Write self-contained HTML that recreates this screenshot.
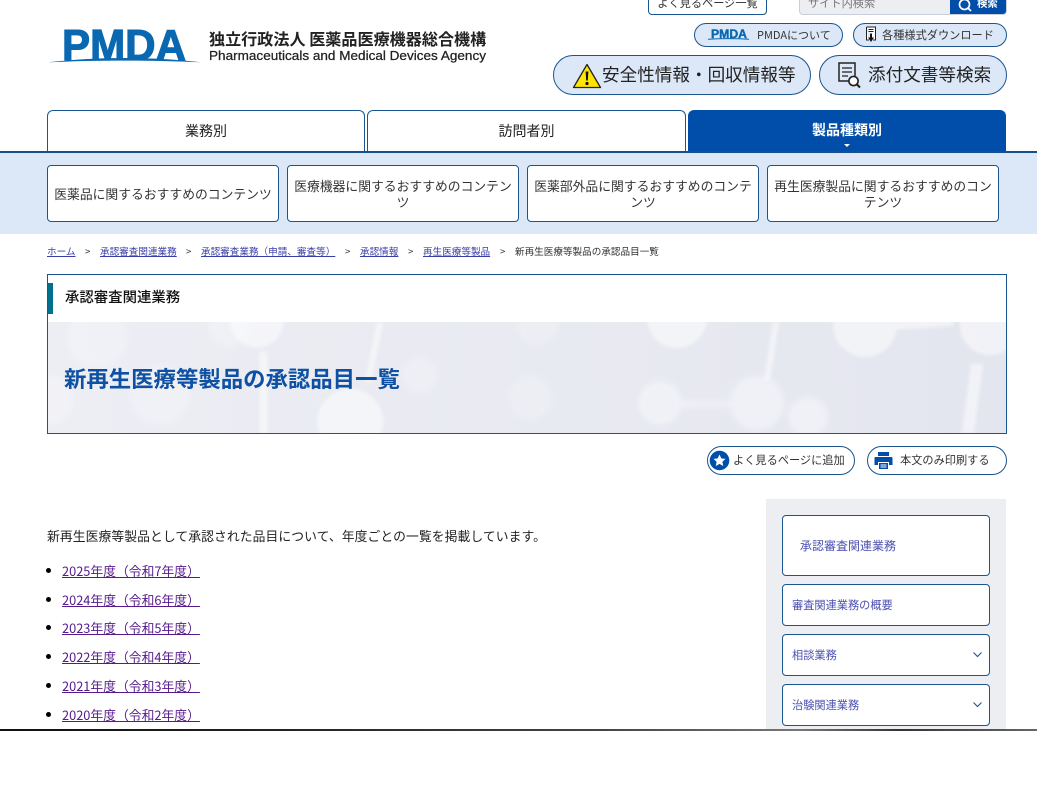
<!DOCTYPE html>
<html lang="ja"><head><meta charset="utf-8"><title>新再生医療等製品の承認品目一覧</title>
<style>
html,body{margin:0;padding:0;background:#fff}
body{width:1056px;height:800px;overflow:hidden;position:relative;font-family:"Noto Sans CJK JP","Liberation Sans",sans-serif;color:#222}
.a{position:absolute;box-sizing:border-box}
.c{display:flex;align-items:center;justify-content:center;text-align:center}
.b{border:1px solid #1a5590;border-radius:4px;background:#fff}
.p{border:1px solid #1a5590;background:#dce8f7}
.t{position:absolute;white-space:nowrap}
.sub{font-size:12.8px;line-height:16px;color:#333;padding:0 6px}
.sd{font-size:11.2px;color:#4a4fb0;display:flex;align-items:center;padding-left:9px}
.li{left:62px;font-size:12.8px;line-height:18px;color:#551a8b;text-decoration:underline;white-space:nowrap}
.dot{position:absolute;left:46px;width:5px;height:5px;border-radius:50%;background:#000}
.bc{top:244px;font-size:9.6px;line-height:14px;white-space:nowrap;color:#3a3fa8;text-decoration:underline}
.gt{top:244px;font-size:9.6px;line-height:14px;color:#333}
</style></head><body>

<!-- logo -->
<svg class="a" style="left:46px;top:24px" width="158" height="42" viewBox="0 0 158 42">
<text x="16" y="36" font-family="Liberation Sans" font-weight="700" font-size="43.5" fill="#0a68b1" stroke="#0a68b1" stroke-width="1.1" textLength="124" lengthAdjust="spacingAndGlyphs">PMDA</text>
<path d="M2 38.300C50 32.500 108 32.500 155 38.300C108 36 50 36 2 38.300Z" fill="#0a68b1"/>
</svg>
<div class="t" style="left:209px;top:28px;font-size:16.1px;line-height:20px;font-weight:700;color:#222">独立行政法人 医薬品医療機器総合機構</div>
<svg class="a" style="left:209px;top:47px" width="280" height="18" viewBox="0 0 280 18"><text x="0" y="13" font-family="Liberation Sans" font-size="12.500" fill="#222" stroke="#222" stroke-width=".25" textLength="277" lengthAdjust="spacingAndGlyphs">Pharmaceuticals and Medical Devices Agency</text></svg>

<!-- top row -->
<div class="a c b" style="left:648px;top:-10px;width:119px;height:25px;font-size:11.2px;color:#333">よく見るページ一覧</div>
<div class="a" style="left:799px;top:-10px;width:208px;height:25px;background:#eceef2;border:1px solid #c8cfdb;border-radius:4px;overflow:hidden">
 <div class="t" style="left:8px;top:2px;font-size:11.2px;line-height:20px;color:#777">サイト内検索</div>
 <div class="a" style="left:150px;top:-1px;width:58px;height:26px;background:#004ea9"></div>
 <svg class="a" style="left:157px;top:6px" width="16" height="16" viewBox="0 0 16 16"><circle cx="7.500" cy="7.500" r="5" fill="none" stroke="#fff" stroke-width="1.700"/><path d="M11 11l3 3" stroke="#fff" stroke-width="1.800"/></svg>
 <div class="t" style="left:177px;top:3px;font-size:10.4px;line-height:18px;font-weight:700;color:#fff">検索</div>
</div>

<!-- small pills -->
<div class="a p" style="left:694px;top:23px;width:149px;height:24px;border-radius:12px"></div>
<svg class="a" style="left:708px;top:27px" width="44" height="15" viewBox="0 0 44 15">
<text x="3" y="11" font-family="Liberation Sans" font-weight="700" font-size="12" fill="#0a68b1" stroke="#0a68b1" stroke-width=".4" textLength="36" lengthAdjust="spacingAndGlyphs">PMDA</text>
<path d="M0 12.300C14 11.400 28 11.400 41 12.300" stroke="#0a68b1" stroke-width="1" fill="none"/></svg>
<div class="t" style="left:757px;top:27px;font-size:11px;line-height:16px;color:#333">PMDAについて</div>

<div class="a p" style="left:853px;top:23px;width:154px;height:24px;border-radius:12px"></div>
<svg class="a" style="left:864px;top:26px" width="14" height="18" viewBox="0 0 14 18"><path d="M2.500 1h9v13h-2.500M5 14H2.500V1" fill="#fff" stroke="#222" stroke-width="1"/><path d="M4.500 3.500h5M4.500 5.500h5" stroke="#222"/><path d="M6 7.500h2v4h2L7 16l-3-4.500h2z" fill="#111"/></svg>
<div class="t" style="left:882px;top:27px;font-size:11.2px;line-height:16px;color:#333">各種様式ダウンロード</div>

<!-- large pills -->
<div class="a p" style="left:553px;top:55px;width:258px;height:40px;border-radius:20px"></div>
<svg class="a" style="left:572px;top:63px" width="30" height="26" viewBox="0 0 30 26"><path d="M15 1.500L28.500 24.500H1.500Z" fill="#ffe500" stroke="#222" stroke-width="1.300" stroke-linejoin="round"/><path d="M13.600 8.500h2.800l-.6 9h-1.600z" fill="#111"/><circle cx="15" cy="20.500" r="1.600" fill="#111"/></svg>
<div class="t" style="left:602px;top:62px;font-size:17.6px;line-height:25px;color:#222">安全性情報・回収情報等</div>

<div class="a p" style="left:819px;top:55px;width:188px;height:40px;border-radius:20px"></div>
<svg class="a" style="left:836px;top:61px" width="26" height="28" viewBox="0 0 26 28"><path d="M16 20H3V2h16v13" fill="none" stroke="#222" stroke-width="1.500"/><path d="M6 7h10M6 11h10M6 15h6" stroke="#222" stroke-width="1.300"/><circle cx="17.500" cy="20" r="4.600" fill="#fff" stroke="#222" stroke-width="1.600"/><path d="M21 23.500l3 3" stroke="#222" stroke-width="2"/></svg>
<div class="t" style="left:868px;top:62px;font-size:17.6px;line-height:25px;color:#222">添付文書等検索</div>

<!-- tabs -->
<div class="a c" style="left:47px;top:110px;width:318px;height:42px;padding-bottom:2px;background:#fff;border:1px solid #1a5590;border-bottom:0;border-radius:6px 6px 0 0;font-size:14px;color:#222">業務別</div>
<div class="a c" style="left:367px;top:110px;width:319px;height:42px;padding-bottom:2px;background:#fff;border:1px solid #1a5590;border-bottom:0;border-radius:6px 6px 0 0;font-size:14px;color:#222">訪問者別</div>
<div class="a c" style="left:688px;top:110px;width:318px;height:42px;padding-bottom:2px;background:#004ea9;border-radius:6px 6px 0 0;font-size:14px;font-weight:700;color:#fff">製品種類別</div>
<div class="a" style="left:844px;top:144px;width:0;height:0;border:3px solid transparent;border-top:3px solid #fff;border-bottom:0"></div>

<!-- sub nav -->
<div class="a" style="left:0;top:151px;width:1037px;height:83px;background:#dce8f7;border-top:2px solid #14508c"></div>
<div class="a c b sub" style="left:47px;top:165px;width:232px;height:57px">医薬品に関するおすすめのコンテンツ</div>
<div class="a c b sub" style="left:287px;top:165px;width:232px;height:57px">医療機器に関するおすすめのコンテン<br>ツ</div>
<div class="a c b sub" style="left:527px;top:165px;width:232px;height:57px">医薬部外品に関するおすすめのコンテ<br>ンツ</div>
<div class="a c b sub" style="left:767px;top:165px;width:232px;height:57px">再生医療製品に関するおすすめのコン<br>テンツ</div>

<!-- breadcrumb -->
<div class="a bc" style="left:47px">ホーム</div><div class="a gt" style="left:85px">&gt;</div>
<div class="a bc" style="left:100px">承認審査関連業務</div><div class="a gt" style="left:186px">&gt;</div>
<div class="a bc" style="left:201px">承認審査業務（申請、審査等）</div><div class="a gt" style="left:345px">&gt;</div>
<div class="a bc" style="left:360px">承認情報</div><div class="a gt" style="left:408px">&gt;</div>
<div class="a bc" style="left:423px">再生医療等製品</div><div class="a gt" style="left:500px">&gt;</div>
<div class="a t" style="left:515px;top:244px;font-size:9.6px;line-height:14px;color:#333">新再生医療等製品の承認品目一覧</div>

<!-- title box -->
<div class="a" style="left:47px;top:274px;width:960px;height:160px;background:#fff;border:1px solid #1a5590;overflow:hidden">
 <div class="a" style="left:-1px;top:8px;width:6px;height:31px;background:#00708f"></div>
 <div class="t" style="left:17px;top:11px;font-size:14.4px;line-height:22px;font-weight:500;color:#111">承認審査関連業務</div>
 <svg class="a" style="left:0;top:47px" width="958" height="111" viewBox="0 0 958 111">
  <defs><linearGradient id="g" x1="0" x2="1" y1="0" y2="0"><stop offset="0" stop-color="#edeef4"/><stop offset="1" stop-color="#e4e6ef"/></linearGradient>
  <filter id="f"><feGaussianBlur stdDeviation="3"/></filter><filter id="f2"><feGaussianBlur stdDeviation="1.500"/></filter></defs>
  <rect width="958" height="111" fill="url(#g)"/>
  <g fill="#fff" opacity=".22" filter="url(#f)">
   <circle cx="2" cy="78" r="24"/><circle cx="49" cy="16" r="30"/><circle cx="112" cy="73" r="30"/>
   <circle cx="372" cy="53" r="18"/><circle cx="482" cy="76" r="22"/><circle cx="489" cy="0" r="22"/>
   <circle cx="180" cy="5" r="20"/>
  </g>
  <g fill="#fff" opacity=".4" filter="url(#f)">
   <circle cx="612" cy="81" r="22"/><circle cx="709" cy="81" r="27"/><circle cx="760" cy="95" r="20"/>
   <path d="M632 79h58v6h-58z"/>
  </g>
  <g fill="#fff" opacity=".5" filter="url(#f2)">
   <circle cx="209" cy="-2" r="27"/><circle cx="302" cy="100" r="33"/>
   <circle cx="817" cy="3" r="32"/><circle cx="942" cy="3" r="30"/>
   <path d="M212 30h7v81h-7zM329 0h6l-12 60h-6zM725 0h6l-9 58h-6zM845 -4h60v8l-60 4zM923 42h12l-9 69h-12zM629 -34a30 30 0 1 0 .1 0z"/>
  </g>
 </svg>
 <div class="t" style="left:16px;top:86px;font-size:22.4px;line-height:34px;font-weight:700;color:#0e51a3">新再生医療等製品の承認品目一覧</div>
</div>

<!-- action buttons -->
<div class="a" style="left:707px;top:446px;width:148px;height:29px;border:1px solid #1a5590;border-radius:15px;background:#fff"></div>
<svg class="a" style="left:709px;top:449px" width="21" height="23" viewBox="0 0 21 23"><circle cx="10.500" cy="11.500" r="9.800" fill="#004ea9"/><path d="M10.500 5.500l1.800 3.900 4.200.5-3.100 2.900.8 4.200-3.700-2.100-3.700 2.100.8-4.200-3.100-2.900 4.200-.5z" fill="#fff"/></svg>
<div class="t" style="left:733px;top:452px;font-size:11.2px;line-height:17px;color:#333">よく見るページに追加</div>
<div class="a" style="left:867px;top:446px;width:140px;height:29px;border:1px solid #1a5590;border-radius:15px;background:#fff"></div>
<svg class="a" style="left:874px;top:451px" width="19" height="19" viewBox="0 0 19 19"><path d="M4 1h11v4H4zM1.500 6h16a1 1 0 0 1 1 1v7h-3.500v-3H4v3H.5V7a1 1 0 0 1 1-1zM5 12h9v6H5z" fill="#004ea9"/><path d="M6.500 14h6M6.500 16h6" stroke="#fff" stroke-width=".9"/></svg>
<div class="t" style="left:900px;top:452px;font-size:11.2px;line-height:17px;color:#333">本文のみ印刷する</div>

<!-- body -->
<div class="t" style="left:47px;top:526px;font-size:12.8px;line-height:20px;letter-spacing:.08px;color:#222">新再生医療等製品として承認された品目について、年度ごとの一覧を掲載しています。</div>
<div class="dot" style="top:568px"></div><div class="a li" style="top:562px">2025年度（令和7年度）</div>
<div class="dot" style="top:597px"></div><div class="a li" style="top:591px">2024年度（令和6年度）</div>
<div class="dot" style="top:625px"></div><div class="a li" style="top:619px">2023年度（令和5年度）</div>
<div class="dot" style="top:654px"></div><div class="a li" style="top:648px">2022年度（令和4年度）</div>
<div class="dot" style="top:683px"></div><div class="a li" style="top:677px">2021年度（令和3年度）</div>
<div class="dot" style="top:712px"></div><div class="a li" style="top:706px">2020年度（令和2年度）</div>

<!-- sidebar -->
<div class="a" style="left:766px;top:499px;width:240px;height:240px;background:#eceef2"></div>
<div class="a b sd" style="left:782px;top:515px;width:208px;height:61px;font-size:12px;padding-left:17px">承認審査関連業務</div>
<div class="a b sd" style="left:782px;top:584px;width:208px;height:42px">審査関連業務の概要</div>
<div class="a b sd" style="left:782px;top:634px;width:208px;height:42px">相談業務</div>
<svg class="a" style="left:972px;top:651px" width="11" height="8" viewBox="0 0 11 8"><path d="M1.500 1.500l4 4 4-4" fill="none" stroke="#2a5a9a" stroke-width="1.200"/></svg>
<div class="a b sd" style="left:782px;top:684px;width:208px;height:42px">治験関連業務</div>
<svg class="a" style="left:972px;top:701px" width="11" height="8" viewBox="0 0 11 8"><path d="M1.500 1.500l4 4 4-4" fill="none" stroke="#2a5a9a" stroke-width="1.200"/></svg>

<!-- cut-off -->
<div class="a" style="left:0;top:730px;width:1056px;height:70px;background:#fff"></div>
<div class="a" style="left:0;top:729px;width:1037px;height:2px;background:linear-gradient(90deg,#111 0,#222 270px,#444 600px,#777 800px,#333 900px,#666 1037px)"></div>
</body></html>
